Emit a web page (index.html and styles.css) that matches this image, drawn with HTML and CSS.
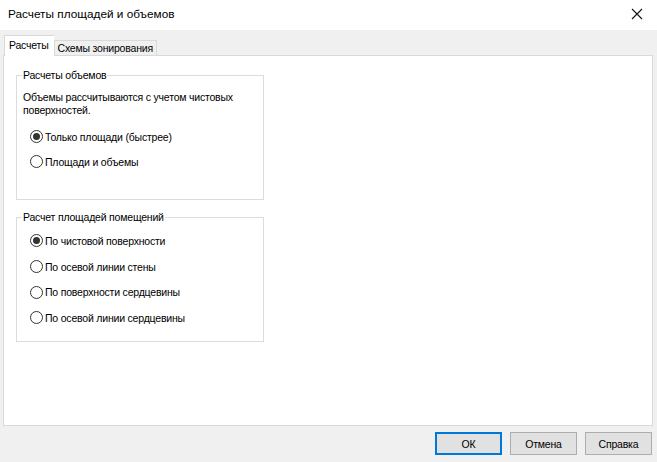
FILE: index.html
```html
<!DOCTYPE html>
<html>
<head>
<meta charset="utf-8">
<link rel="stylesheet" href="styles.css">
</head>
<body>
<div class="window">
  <div class="titlebar">
    <span class="title">Расчеты площадей и объемов</span>
    <svg class="close" width="12" height="12" viewBox="0 0 12 12"><path d="M1 1L11 11M11 1L1 11" stroke="#111" stroke-width="1.1" fill="none"/></svg>
  </div>
  <div class="client">
    <div class="tabs">
      <div class="tab active">Расчеты</div>
      <div class="tab">Схемы зонирования</div>
    </div>
    <div class="panel">
      <fieldset class="group g1">
        <legend>Расчеты объемов</legend>
        <p class="note">Объемы рассчитываются с учетом чистовых поверхностей.</p>
        <label class="radio"><span class="dot checked"></span>Только площади (быстрее)</label>
        <label class="radio"><span class="dot"></span>Площади и объемы</label>
      </fieldset>
      <fieldset class="group g2">
        <legend>Расчет площадей помещений</legend>
        <label class="radio"><span class="dot checked"></span>По чистовой поверхности</label>
        <label class="radio"><span class="dot"></span>По осевой линии стены</label>
        <label class="radio"><span class="dot"></span>По поверхности сердцевины</label>
        <label class="radio"><span class="dot"></span>По осевой линии сердцевины</label>
      </fieldset>
    </div>
    <div class="footer">
      <button class="btn default">ОК</button>
      <button class="btn">Отмена</button>
      <button class="btn">Справка</button>
    </div>
  </div>
</div>
</body>
</html>
```
FILE: styles.css
```css
html, body { margin: 0; padding: 0; }
body {
  width: 657px; height: 462px; overflow: hidden;
  font-family: "Liberation Sans", Arial, sans-serif;
  font-size: 10.5px; letter-spacing: -0.2px; color: #000;
  background: #f0f0f0;
}
.window { width: 657px; height: 462px; display: flex; flex-direction: column; }
.titlebar {
  height: 30px; background: #fff; display: flex; align-items: center;
  justify-content: space-between; padding: 0 14px 0 8px; box-sizing: border-box;
}
.title { font-size: 11.8px; letter-spacing: 0; color: #000; position: relative; top: -1px; }
.close { position: relative; top: -1px; }
.client { flex: 1; display: flex; flex-direction: column; padding: 5px 4px 0 3px; }
.tabs { display: flex; align-items: flex-end; height: 20px; padding-left: 1px; }
.tab {
  height: 14px; line-height: 14px; padding: 0 3px;
  border: 1px solid #d9d9d9; border-bottom: none; background: #f0f0f0;
  white-space: nowrap;
}
.tab.active {
  background: #fff; height: 20px; line-height: 18px; padding: 0 5px 0 4px;
  position: relative; top: 1px; z-index: 1; border-right: none;
}
.panel {
  height: 371px; background: #fff; border: 1px solid #d9d9d9;
  padding: 12px 0 0 12px; box-sizing: border-box;
}
.group {
  width: 248px; box-sizing: border-box; margin: 0; border: 1px solid #dcdcdc;
  padding: 0 0 0 6px; position: relative;
}
.group legend { padding: 0 1px; margin-left: -1px; line-height: 14px; }
.g1 { height: 132px; }
.g2 { height: 132px; margin-top: 10px; }
.note { margin: 9px 0 7px 0; width: 235px; line-height: 13px; }
.g2 .radio:first-of-type { margin-top: 4px; }
.radio { display: flex; align-items: center; height: 25.7px; padding-left: 7px; white-space: nowrap; }
.g1 .radio { height: 25px; }
.dot {
  width: 11px; height: 11px; border: 1px solid #333; border-radius: 50%;
  margin-right: 2px; box-sizing: content-box; position: relative; background: #fff;
}
.dot.checked::after {
  content: ""; position: absolute; left: 2px; top: 2px; width: 7px; height: 7px;
  border-radius: 50%; background: #333;
}
.footer { display: flex; justify-content: flex-end; gap: 8px; padding: 6px 1px 0 0; }
.btn {
  width: 67px; height: 23px; font-family: inherit; font-size: 10.5px; letter-spacing: -0.2px;
  background: #e1e1e1; border: 1px solid #adadad; color: #000; padding: 0;
}
.btn.default { border: 2px solid #0078d7; }
```
